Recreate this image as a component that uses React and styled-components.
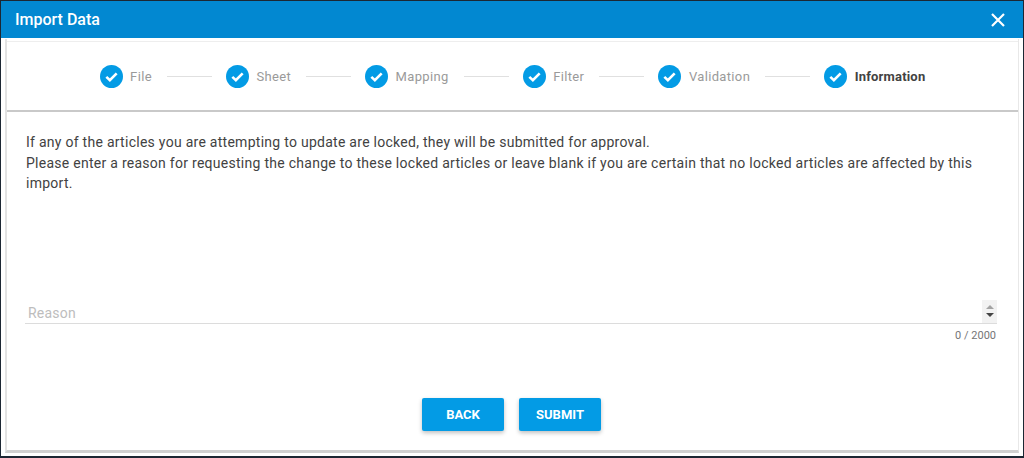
import React from 'react'
import styled, { createGlobalStyle } from 'styled-components'

const Global = createGlobalStyle`
  html, body { margin: 0; padding: 0; background: #fff; }
  body { font-family: Roboto, "Liberation Sans", sans-serif; }
`
const Dialog = styled.div`
  width: 1024px;
  height: 458px;
  box-sizing: border-box;
  display: flex;
  flex-direction: column;
  background: #fff;
  border-top: 1px solid #1c2733;
  border-left: 1px solid #1c2733;
  border-right: 1px solid #1c2733;
  border-bottom: 2px solid #1c2733;
  overflow: hidden;
`
const TitleBar = styled.div`
  height: 37px;
  flex: none;
  display: flex;
  align-items: center;
  justify-content: space-between;
  padding: 0 18px 0 14px;
  background: #0288d1;
  color: #fff;
  font-size: 16px;
  font-weight: 500;
`
const CloseBtn = styled.svg`
  width: 14px;
  height: 14px;
  display: block;
`
const Body = styled.div`
  flex: 1;
  margin: 1px 4px 3px 4px;
  display: flex;
  flex-direction: column;
  border-left: 2px solid #e2e2e2;
  border-bottom: 3px solid #d0d0d0;
  border-right: 1px solid #e8e8e8;
  min-height: 0;
`
const Stepper = styled.div`
  height: 71px;
  margin-top: 2px;
  flex: none;
  box-sizing: border-box;
  display: flex;
  align-items: center;
  justify-content: center;
  border-top: 1px solid #eeeeee;
  border-bottom: 2px solid #c9c9c9;
`
const Step = styled.div`
  display: flex;
  align-items: center;
  gap: 7.5px;
`
const StepLabel = styled.span`
  font-size: 13px;
  letter-spacing: ${p => (p.$active ? '0.2px' : '0.35px')};
  font-weight: ${p => (p.$active ? 700 : 400)};
  color: ${p => (p.$active ? '#424242' : '#9a9a9a')};
`
const Connector = styled.div`
  width: 45px;
  height: 1px;
  margin: 1px 14px 0 15px;
  background: #e0e0e0;
`
const Content = styled.div`
  flex: 1;
  display: flex;
  flex-direction: column;
  padding: 20px 21px 0 18px;
  min-height: 0;
`
const Message = styled.p`
  margin: 0 0 0 1px;
  font-size: 14px;
  letter-spacing: 0.27px;
  line-height: 20.5px;
  color: #424242;
`
const Field = styled.div`
  margin-top: 104px;
  display: flex;
  align-items: flex-end;
  justify-content: space-between;
  height: 25px;
  border-bottom: 1px solid #dcdcdc;
`
const Placeholder = styled.span`
  padding: 0 0 2px 3px;
  font-size: 14px;
  letter-spacing: 0.2px;
  color: #bdbdbd;
`
const Spinner = styled.div`
  width: 15px;
  height: 23px;
  display: flex;
  flex-direction: column;
  align-items: center;
  justify-content: center;
  gap: 4px;
  background: #f2f2f2;
`
const Arrow = styled.div`
  width: 0;
  height: 0;
  border-left: 4px solid transparent;
  border-right: 4px solid transparent;
  ${p => (p.$up ? `border-bottom: 4px solid #a3a3a3;` : `border-top: 4px solid #444;`)}
`
const Counter = styled.div`
  margin-top: 5px;
  padding-right: 1px;
  text-align: right;
  font-size: 11px;
  line-height: 13px;
  color: #757575;
`
const Actions = styled.div`
  margin: 56px 0 0 1px;
  display: flex;
  justify-content: center;
  gap: 15px;
`
const Button = styled.button`
  width: 82px;
  height: 33px;
  padding: 0;
  border: 0;
  border-radius: 2px;
  background: #039be5;
  color: #fff;
  font-family: inherit;
  font-size: 13px;
  font-weight: 700;
  box-shadow: 0 2px 4px rgba(0, 0, 0, 0.25);
`

const CheckIcon = () => (
  <svg width="23" height="23" viewBox="0 0 24 24">
    <circle cx="12" cy="12" r="12" fill="#039be5" />
    <path d="M6.6 12.4l3.7 3.5 7.1-7.2" fill="none" stroke="#fff" strokeWidth="2.7" />
  </svg>
)

const steps = ['File', 'Sheet', 'Mapping', 'Filter', 'Validation', 'Information']

export default function App() {
  return (
    <Dialog>
      <Global />
      <TitleBar>
        <span>Import Data</span>
        <CloseBtn viewBox="0 0 14 14">
          <path d="M1 1l12 12M13 1L1 13" stroke="#fff" strokeWidth="2.2" />
        </CloseBtn>
      </TitleBar>
      <Body>
        <Stepper>
          {steps.map((s, i) => (
            <React.Fragment key={s}>
              <Step>
                <CheckIcon />
                <StepLabel $active={i === steps.length - 1}>{s}</StepLabel>
              </Step>
              {i < steps.length - 1 && <Connector />}
            </React.Fragment>
          ))}
        </Stepper>
        <Content>
          <Message>
            If any of the articles you are attempting to update are locked, they will be submitted for approval.
            <br />
            Please enter a reason for requesting the change to these locked articles or leave blank if you are certain that no locked articles are affected by this import.
          </Message>
          <Field>
            <Placeholder>Reason</Placeholder>
            <Spinner>
              <Arrow $up />
              <Arrow />
            </Spinner>
          </Field>
          <Counter>0 / 2000</Counter>
          <Actions>
            <Button>BACK</Button>
            <Button>SUBMIT</Button>
          </Actions>
        </Content>
      </Body>
    </Dialog>
  )
}
